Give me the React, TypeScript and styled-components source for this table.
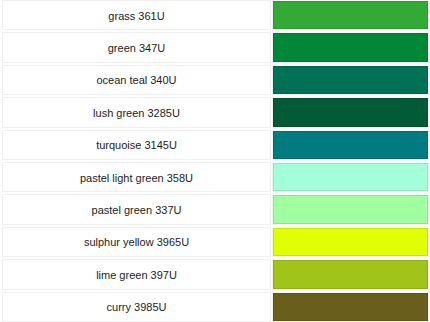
import React from "react"
import styled, { createGlobalStyle } from "styled-components"

const GlobalStyle = createGlobalStyle`
  html, body {
    margin: 0;
    padding: 0;
    background: #ffffff;
  }
`

interface Shade {
  name: string
  hex: string
}

const shades: Shade[] = [
  { name: "grass 361U", hex: "#33a936" },
  { name: "green 347U", hex: "#008737" },
  { name: "ocean teal 340U", hex: "#007155" },
  { name: "lush green 3285U", hex: "#035a37" },
  { name: "turquoise 3145U", hex: "#007c80" },
  { name: "pastel light green 358U", hex: "#a2ffd9" },
  { name: "pastel green 337U", hex: "#a0ffa0" },
  { name: "sulphur yellow 3965U", hex: "#e0ff00" },
  { name: "lime green 397U", hex: "#a0c41a" },
  { name: "curry 3985U", hex: "#6a5e1c" },
]

export default function App() {
  return (
    <>
      <GlobalStyle />
      <Table>
        {shades.map((shade) => (
          <Row key={shade.name}>
            <NameCell>{shade.name}</NameCell>
            <SwatchCell>
              <Swatch color={shade.hex} />
            </SwatchCell>
          </Row>
        ))}
      </Table>
    </>
  )
}

const Table = styled.div`
  display: flex;
  flex-direction: column;
  gap: 2px;
  padding: 0 1px 0 2px;
  font-family: "Liberation Sans", Arial, sans-serif;
`

const Row = styled.div`
  display: grid;
  grid-template-columns: 1fr 157px;
  column-gap: 1px;
  height: 30.4px;
`

const NameCell = styled.div`
  display: flex;
  align-items: center;
  justify-content: center;
  border: 1px solid #f0f0f0;
  font-size: 11px;
  color: #1c1c1c;
  padding-top: 1px;
`

const SwatchCell = styled.div`
  border: 1px solid #f3f3f3;
  border-top-color: transparent;
`

const Swatch = styled.div<{ color: string }>`
  height: 100%;
  box-sizing: border-box;
  background: ${({ color }) => color};
  border: 1px solid rgba(0, 0, 0, 0.1);
`
